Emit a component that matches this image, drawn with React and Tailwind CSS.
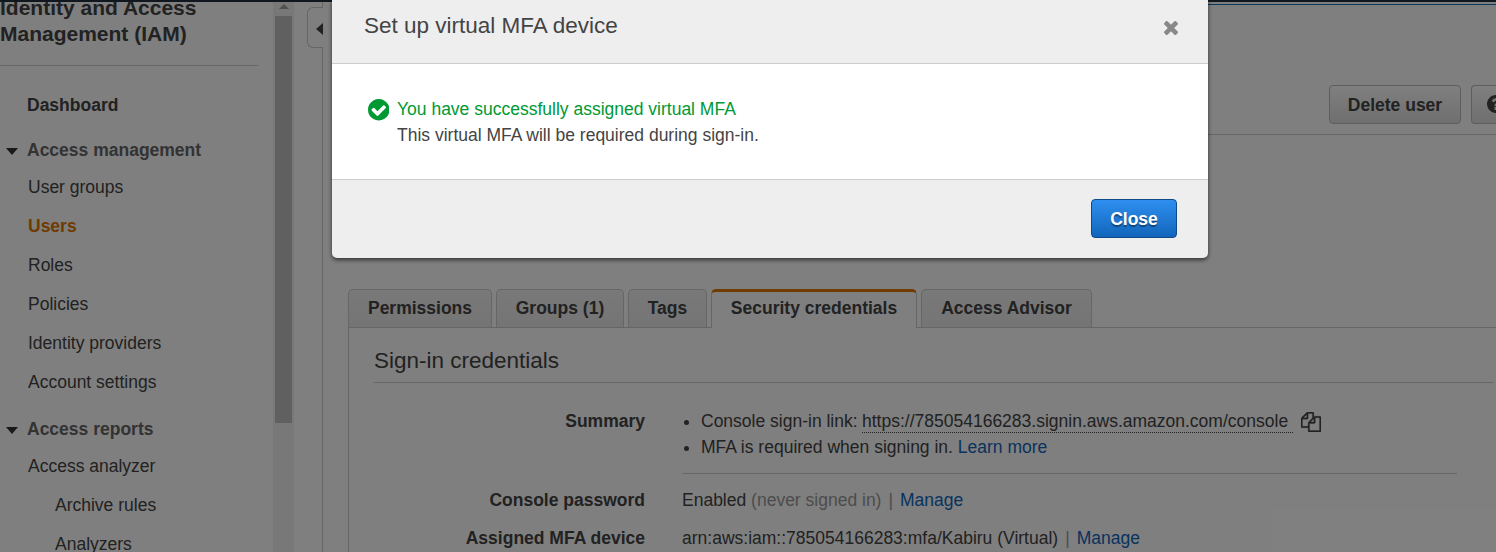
import React from "react";

const CIRCLE =
  "M1664 896q0 209-103 385.5t-279.5 279.5-385.5 103-385.5-103-279.5-279.5-103-385.5 103-385.5 279.5-279.5 385.5-103 385.5 103 279.5 279.5 103 385.5z";

function CheckIcon() {
  return (
    <svg viewBox="128 128 1536 1536" className="mt-[3px] mr-[8px] ml-[0.5px] h-[21.5px] w-[21.5px] shrink-0">
      <path
        fill="#093"
        d="M1412 734q0-28-18-46l-91-90q-19-19-45-19t-45 19l-408 407-226-226q-19-19-45-19t-45 19l-91 90q-18 18-18 46 0 27 18 45l362 362q19 19 45 19 27 0 46-19l543-543q18-18 18-45zm252 162q0 209-103 385.5t-279.5 279.5-385.5 103-385.5-103-279.5-279.5-103-385.5 103-385.5 279.5-279.5 385.5-103 385.5 103 279.5 279.5 103 385.5z"
      />
    </svg>
  );
}

function HelpIcon() {
  return (
    <svg viewBox="128 128 1536 1536" className="-mt-[2px] h-[18px] w-[18px] shrink-0">
      <path d={CIRCLE} fill="#444" />
      <path
        fill="#f0f0f0"
        d="M1024 1376v-192q0-14-9-23t-23-9h-192q-14 0-23 9t-9 23v192q0 14 9 23t23 9h192q14 0 23-9t9-23zm256-672q0-88-55.5-163t-138.5-116-170-41q-243 0-371 213-15 24 8 42l132 100q7 6 19 6 16 0 25-12 53-68 86-92 34-24 86-24 48 0 85.5 26t37.5 59q0 38-20 61t-68 45q-63 28-115.5 86.5t-52.5 125.5v36q0 14 9 23t23 9h192q14 0 23-9t9-23q0-19 21.5-49.5t54.5-49.5q32-18 49-28.5t46-35 44.5-48 28-60.5 12.5-81z"
      />
    </svg>
  );
}

function CloseIcon() {
  return (
    <svg viewBox="302 366 1188 1188" className="h-[14px] w-[14px]" fill="#888">
      <path d="M1490 1322q0 40-28 68l-136 136q-28 28-68 28t-68-28l-294-294-294 294q-28 28-68 28t-68-28l-136-136q-28-28-28-68t28-68l294-294-294-294q-28-28-28-68t28-68l136-136q28-28 68-28t68 28l294 294 294-294q28-28 68-28t68 28l136 136q28 28 28 68t-28 68l-294 294 294 294q28 28 28 68z" />
    </svg>
  );
}

function CopyIcon() {
  return (
    <svg viewBox="0 0 1792 1792" className="mt-[2px] ml-[8px] h-5 w-5 shrink-0" fill="#444" stroke="#444" strokeWidth="30">
      <path d="M1696 384q40 0 68 28t28 68v1216q0 40-28 68t-68 28h-960q-40 0-68-28t-28-68v-288h-544q-40 0-68-28t-28-68v-672q0-40 20-88t48-76l408-408q28-28 76-48t88-20h416q40 0 68 28t28 68v328q68-40 128-40h416zm-544 213l-299 299h299v-299zm-640-384l-299 299h299v-299zm196 647l316-316v-416h-384v416q0 40-28 68t-68 28h-416v640h512v-256q0-40 20-88t48-76zm956 804v-1152h-384v416q0 40-28 68t-68 28h-416v640h896z" />
    </svg>
  );
}

function Section({ children }) {
  return (
    <div className="flex h-[26px] items-center font-bold text-[#666]">
      <svg viewBox="0 0 12 7" className="mt-[3px] mr-[9px] ml-[6px] h-[7px] w-3" fill="#333">
        <path d="M0 0h12L6 7z" />
      </svg>
      {children}
    </div>
  );
}

function Item({ children, active, nested }) {
  return (
    <div
      className={`flex h-[39px] items-center ${nested ? "pl-[55px]" : "pl-[28px]"} ${
        active ? "font-bold text-[#e07700]" : ""
      }`}
    >
      {children}
    </div>
  );
}

function Sidebar() {
  return (
    <aside className="h-full w-[273px] shrink-0 overflow-hidden">
      <h1 className="-mt-[7px] h-[52px] text-[21px] leading-[26px] font-bold">
        Identity and Access
        <br />
        Management (IAM)
      </h1>
      <div className="mt-[18px] mr-[15px] h-px bg-[#ccc]" />
      <div className="mt-[26px] h-[26px] pl-[27px] leading-[26px] font-bold">Dashboard</div>
      <div className="mt-[19px]">
        <Section>Access management</Section>
        <div className="mt-[5px]">
          <Item>User groups</Item>
          <Item active>Users</Item>
          <Item>Roles</Item>
          <Item>Policies</Item>
          <Item>Identity providers</Item>
          <Item>Account settings</Item>
        </div>
      </div>
      <div className="mt-[14px]">
        <Section>Access reports</Section>
        <div className="mt-[5px]">
          <Item>Access analyzer</Item>
          <Item nested>Archive rules</Item>
          <Item nested>Analyzers</Item>
        </div>
      </div>
    </aside>
  );
}

function Scrollbar() {
  return (
    <div className="flex h-full w-[21px] shrink-0 flex-col items-center bg-[#f1f1f1]">
      <svg viewBox="0 0 10 5" className="mt-[2px] h-[5px] w-[10px]" fill="#a0a0a0">
        <path d="M5 0l5 5H0z" />
      </svg>
      <div className="mt-[7px] h-[407px] w-[17px] bg-[#c1c1c1]" />
    </div>
  );
}

function Gutter() {
  return (
    <div className="flex h-full w-[29px] shrink-0 flex-col items-end">
      <div className="h-[5px] w-px bg-[#ccc]" />
      <div className="flex h-[41px] w-4 items-center justify-end rounded-l-[6px] border border-r-0 border-[#ccc]">
        <svg viewBox="0 0 7 12" className="mt-[2px] h-3 w-[7px]" fill="#444">
          <path d="M7 0v12L0 6z" />
        </svg>
      </div>
      <div className="w-px flex-1 bg-[#ccc]" />
    </div>
  );
}

const tabBase = "shrink-0 rounded-t-[5px] text-center font-bold border-x border-[#ccc]";
const tabIdle = "h-[38px] border-t bg-linear-to-b from-[#f2f2f2] to-[#eaeaea] leading-[37px]";

function Tabs() {
  return (
    <div className="flex h-[39px] gap-1 border-b border-[#ccc]">
      <div className={`${tabBase} ${tabIdle} w-[144px]`}>Permissions</div>
      <div className={`${tabBase} ${tabIdle} w-[128px]`}>Groups (1)</div>
      <div className={`${tabBase} ${tabIdle} w-[79px]`}>Tags</div>
      <div
        className={`${tabBase} mb-[-1px] h-[39px] w-[206px] border-t-[3px] border-t-[#e07700] bg-white leading-[33px]`}
      >
        Security credentials
      </div>
      <div className={`${tabBase} ${tabIdle} w-[171px]`}>Access Advisor</div>
    </div>
  );
}

function Row({ label, children }) {
  return (
    <div className="flex leading-[26px]">
      <div className="w-[271px] shrink-0 text-right font-bold">{label}</div>
      <div className="ml-[37px] w-[775px]">{children}</div>
    </div>
  );
}

function Bullet({ children }) {
  return (
    <li className="flex h-[26px] items-center">
      <span className="mt-[3px] mr-[12px] ml-[2px] h-[5px] w-[5px] shrink-0 rounded-full bg-[#444]" />
      {children}
    </li>
  );
}

const Bar = () => <span className="mx-[7px] text-[#999]">|</span>;

function Main() {
  return (
    <main className="h-full flex-1 overflow-hidden pl-[25px]">
      <div className="mt-[2px] h-px bg-[#146eb4]" />
      <div className="mt-[80px] flex justify-end gap-[10px]">
        <div className="h-[39px] w-[132px] rounded-[4px] border border-[#bbb] bg-linear-to-b from-white to-[#dfdfdf] text-center leading-[38px] font-bold">
          Delete user
        </div>
        <div className="flex h-[39px] w-[25px] items-center overflow-hidden rounded-l-[4px] border border-r-0 border-[#bbb] bg-linear-to-b from-white to-[#dfdfdf] pl-[15px]">
          <HelpIcon />
        </div>
      </div>
      <div className="mt-[10px] h-px bg-[#ccc]" />
      <div className="mt-[154px]">
        <Tabs />
      </div>
      <section className="h-[224px] border-l border-[#ccc] pl-[25px]">
        <h2 className="mr-[2px] h-[55px] border-b border-[#ccc] pt-[17px] text-[22.5px] leading-[32px]">
          Sign-in credentials
        </h2>
        <div className="pt-[25px]">
          <Row label="Summary">
            <ul className="h-[66px] border-b border-[#ccc]">
              <Bullet>
                <span className="w-[161px] shrink-0">Console sign-in link:</span>
                <span className="h-[24px] w-[431px] shrink-0 border-b border-dotted border-[#444] leading-[24px]">
                  https://785054166283.signin.aws.amazon.com/console
                </span>
                <CopyIcon />
              </Bullet>
              <Bullet>
                <span>
                  MFA is required when signing in. <a className="text-[#1166bb]">Learn more</a>
                </span>
              </Bullet>
            </ul>
          </Row>
          <div className="mt-[13px]">
            <Row label="Console password">
              Enabled <span className="text-[#999]">(never signed in)</span>
              <Bar />
              <a className="text-[#1166bb]">Manage</a>
            </Row>
          </div>
          <div className="mt-[12px]">
            <Row label="Assigned MFA device">
              arn:aws:iam::785054166283:mfa/Kabiru (Virtual)
              <Bar />
              <a className="text-[#1166bb]">Manage</a>
            </Row>
          </div>
        </div>
      </section>
    </main>
  );
}

function Modal() {
  return (
    <div className="absolute top-0 left-[332px] flex h-[258px] w-[876px] flex-col overflow-hidden rounded-b-[5px] bg-[#eee] shadow-[0_2px_4px_rgba(0,0,0,0.6)]">
      <div className="flex h-[64px] items-start justify-between border-b border-[#ccc] pt-[10px] pr-[30px] pl-[32px]">
        <h2 className="text-[22.5px] leading-[32px]">Set up virtual MFA device</h2>
        <div className="pt-[11px]">
          <CloseIcon />
        </div>
      </div>
      <div className="flex h-[116px] border-b border-[#ccc] bg-white pt-[32px] pl-[35px] leading-[26px]">
        <CheckIcon />
        <div>
          <div className="text-[#093]">You have successfully assigned virtual MFA</div>
          <div>This virtual MFA will be required during sign-in.</div>
        </div>
      </div>
      <div className="flex justify-end pt-[19px] pr-[31px]">
        <button className="h-[39px] w-[86px] rounded-[4px] border border-[#0e4a8a] bg-linear-to-b from-[#2e8fef] to-[#1166bb] leading-[38px] font-bold text-white [text-shadow:0_2px_1px_rgba(0,0,0,0.4)]">
          Close
        </button>
      </div>
    </div>
  );
}

export default function App() {
  return (
    <div className="relative h-[552px] w-[1496px] overflow-hidden bg-white font-['Liberation_Sans',Arial,sans-serif] text-[17.5px] text-[#444]">
      <div className="h-[2px] bg-[#232f3e]" />
      <div className="flex h-[550px]">
        <Sidebar />
        <Scrollbar />
        <Gutter />
        <Main />
      </div>
      <div className="absolute inset-0 bg-black/50" />
      <Modal />
    </div>
  );
}
